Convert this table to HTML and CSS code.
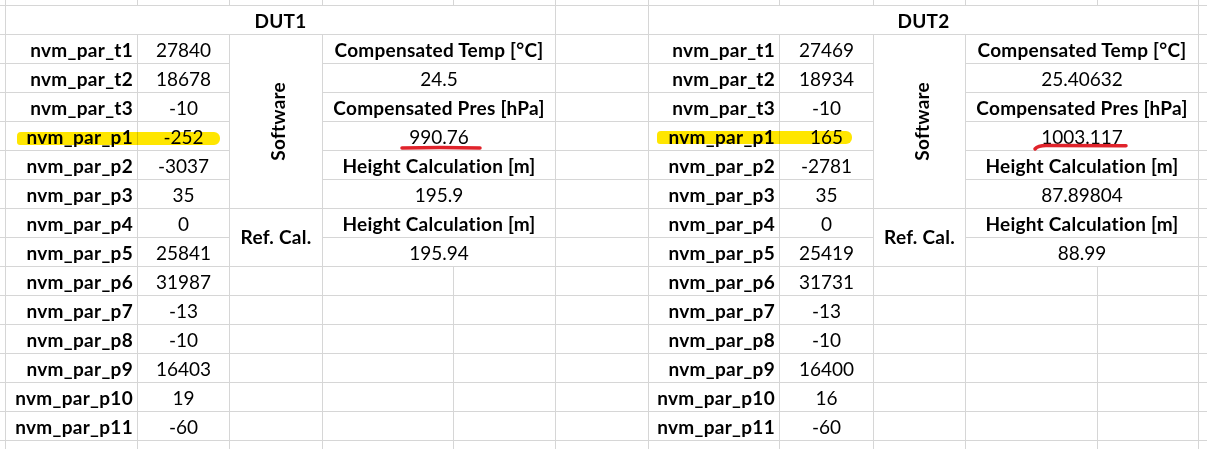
FILE: index.html
```html
<!DOCTYPE html>
<html lang="en">
<head>
<meta charset="utf-8">
<title>DUT comparison</title>
<link rel="stylesheet" href="styles.css">
</head>
<body>
<div class="sheet">
  <!-- row 0 (partial) -->
  <div class="c"></div><div class="c"></div><div class="c"></div><div class="c"></div><div class="c"></div><div class="c"></div><div class="c"></div><div class="c"></div><div class="c"></div><div class="c"></div><div class="c"></div><div class="c"></div><div class="c"></div>
  <!-- header -->
  <div class="c"></div><div class="c hd dut">DUT1</div><div class="c"></div><div class="c hd dut">DUT2</div><div class="c"></div>
  <!-- t1 -->
  <div class="c"></div><div class="c lbl">nvm_par_t1</div><div class="c val">27840</div><div class="c sw"><span class="rot">Software</span></div><div class="c cmp hd">Compensated Temp [°C]</div>
  <div class="c"></div><div class="c lbl">nvm_par_t1</div><div class="c val">27469</div><div class="c sw"><span class="rot">Software</span></div><div class="c cmp hd">Compensated Temp [°C]</div><div class="c"></div>
  <!-- t2 -->
  <div class="c"></div><div class="c lbl">nvm_par_t2</div><div class="c val">18678</div><div class="c cmp val">24.5</div>
  <div class="c"></div><div class="c lbl">nvm_par_t2</div><div class="c val">18934</div><div class="c cmp val">25.40632</div><div class="c"></div>
  <!-- t3 -->
  <div class="c"></div><div class="c lbl">nvm_par_t3</div><div class="c val">-10</div><div class="c cmp hd">Compensated Pres [hPa]</div>
  <div class="c"></div><div class="c lbl">nvm_par_t3</div><div class="c val">-10</div><div class="c cmp hd">Compensated Pres [hPa]</div><div class="c"></div>
  <!-- p1 -->
  <div class="c"></div><div class="c lbl">nvm_par_p1</div><div class="c val">-252</div><div class="c cmp val">990.76</div>
  <div class="c"></div><div class="c lbl">nvm_par_p1</div><div class="c val">165</div><div class="c cmp val">1003.117</div><div class="c"></div>
  <!-- p2 -->
  <div class="c"></div><div class="c lbl">nvm_par_p2</div><div class="c val">-3037</div><div class="c cmp hd">Height Calculation [m]</div>
  <div class="c"></div><div class="c lbl">nvm_par_p2</div><div class="c val">-2781</div><div class="c cmp hd">Height Calculation [m]</div><div class="c"></div>
  <!-- p3 -->
  <div class="c"></div><div class="c lbl">nvm_par_p3</div><div class="c val">35</div><div class="c cmp val">195.9</div>
  <div class="c"></div><div class="c lbl">nvm_par_p3</div><div class="c val">35</div><div class="c cmp val">87.89804</div><div class="c"></div>
  <!-- p4 -->
  <div class="c"></div><div class="c lbl">nvm_par_p4</div><div class="c val">0</div><div class="c rc hd mid">Ref. Cal.</div><div class="c cmp hd">Height Calculation [m]</div>
  <div class="c"></div><div class="c lbl">nvm_par_p4</div><div class="c val">0</div><div class="c rc hd mid">Ref. Cal.</div><div class="c cmp hd">Height Calculation [m]</div><div class="c"></div>
  <!-- p5 -->
  <div class="c"></div><div class="c lbl">nvm_par_p5</div><div class="c val">25841</div><div class="c cmp val">195.94</div>
  <div class="c"></div><div class="c lbl">nvm_par_p5</div><div class="c val">25419</div><div class="c cmp val">88.99</div><div class="c"></div>
  <!-- p6 -->
  <div class="c"></div><div class="c lbl">nvm_par_p6</div><div class="c val">31987</div><div class="c"></div><div class="c"></div><div class="c"></div>
  <div class="c"></div><div class="c lbl">nvm_par_p6</div><div class="c val">31731</div><div class="c"></div><div class="c"></div><div class="c"></div><div class="c"></div>
  <!-- p7 -->
  <div class="c"></div><div class="c lbl">nvm_par_p7</div><div class="c val">-13</div><div class="c"></div><div class="c"></div><div class="c"></div>
  <div class="c"></div><div class="c lbl">nvm_par_p7</div><div class="c val">-13</div><div class="c"></div><div class="c"></div><div class="c"></div><div class="c"></div>
  <!-- p8 -->
  <div class="c"></div><div class="c lbl">nvm_par_p8</div><div class="c val">-10</div><div class="c"></div><div class="c"></div><div class="c"></div>
  <div class="c"></div><div class="c lbl">nvm_par_p8</div><div class="c val">-10</div><div class="c"></div><div class="c"></div><div class="c"></div><div class="c"></div>
  <!-- p9 -->
  <div class="c"></div><div class="c lbl">nvm_par_p9</div><div class="c val">16403</div><div class="c"></div><div class="c"></div><div class="c"></div>
  <div class="c"></div><div class="c lbl">nvm_par_p9</div><div class="c val">16400</div><div class="c"></div><div class="c"></div><div class="c"></div><div class="c"></div>
  <!-- p10 -->
  <div class="c"></div><div class="c lbl">nvm_par_p10</div><div class="c val">19</div><div class="c"></div><div class="c"></div><div class="c"></div>
  <div class="c"></div><div class="c lbl">nvm_par_p10</div><div class="c val">16</div><div class="c"></div><div class="c"></div><div class="c"></div><div class="c"></div>
  <!-- p11 -->
  <div class="c"></div><div class="c lbl">nvm_par_p11</div><div class="c val">-60</div><div class="c"></div><div class="c"></div><div class="c"></div>
  <div class="c"></div><div class="c lbl">nvm_par_p11</div><div class="c val">-60</div><div class="c"></div><div class="c"></div><div class="c"></div><div class="c"></div>
  <!-- bottom partial row -->
  <div class="c"></div><div class="c"></div><div class="c"></div><div class="c"></div><div class="c"></div><div class="c"></div><div class="c"></div><div class="c"></div><div class="c"></div><div class="c"></div><div class="c"></div><div class="c"></div><div class="c"></div>

  <!-- annotations drawn over the sheet -->
  <div class="hl hl-a"></div>
  <div class="hl hl-b"></div>
  <svg class="ul ul-a" width="84" height="10" viewBox="0 0 84 10"><path d="M3 5 Q40 4.2 81 5" /></svg>
  <svg class="ul ul-b" width="98" height="12" viewBox="0 0 98 12"><path d="M3 8 Q6 4.5 14 4.5 L94 4.8" /></svg>
</div>
</body>
</html>
```

FILE: styles.css
```css
html, body {
  margin: 0;
  padding: 0;
  background: #ffffff;
  overflow: hidden;
}

.sheet {
  position: relative;
  display: grid;
  grid-template-columns: 5px 131px 91px 92px 130px 101px 92px 130px 93px 91px 131px 100px 8px;
  grid-template-rows: 5px repeat(15, 28px) 20px;
  gap: 1px;
  width: 1207px;
  background: #d6d6d6;
  font-family: Lato, "Open Sans", sans-serif;
  font-size: 19px;
  line-height: 1.2;
  color: #000;
}

.c {
  background: #fff;
  display: flex;
  align-items: flex-end;
  padding-bottom: 1px;
  white-space: nowrap;
  min-width: 0;
}

.lbl {
  font-weight: 700;
  letter-spacing: 0.3px;
  justify-content: flex-end;
  padding-right: 4px;
}

.val {
  justify-content: center;
}

.hd {
  font-weight: 700;
  letter-spacing: 0.25px;
  justify-content: center;
}

.dut {
  grid-column: span 5;
}

.cmp {
  grid-column: span 2;
}

.sw {
  grid-row: span 6;
  justify-content: center;
  align-items: center;
  padding: 0 0 0 5px;
}

.rot {
  writing-mode: vertical-rl;
  transform: rotate(180deg);
  font-weight: 700;
  letter-spacing: 0.25px;
}

.rc {
  grid-row: span 2;
}

.mid {
  align-items: center;
  padding-bottom: 0;
}

.hl {
  position: absolute;
  background: #ffe600;
  mix-blend-mode: multiply;
  border-radius: 4px 6px 6px 3px;
}

.hl-a {
  left: 17px;
  top: 132px;
  width: 203px;
  height: 13px;
}

.hl-b {
  left: 657px;
  top: 131px;
  width: 195px;
  height: 13px;
}

.ul {
  position: absolute;
  overflow: visible;
}

.ul path {
  fill: none;
  stroke: #e0232b;
  stroke-width: 3.5;
  stroke-linecap: round;
}

.ul-a {
  left: 399px;
  top: 143px;
}

.ul-b {
  left: 1032px;
  top: 141px;
}
```
